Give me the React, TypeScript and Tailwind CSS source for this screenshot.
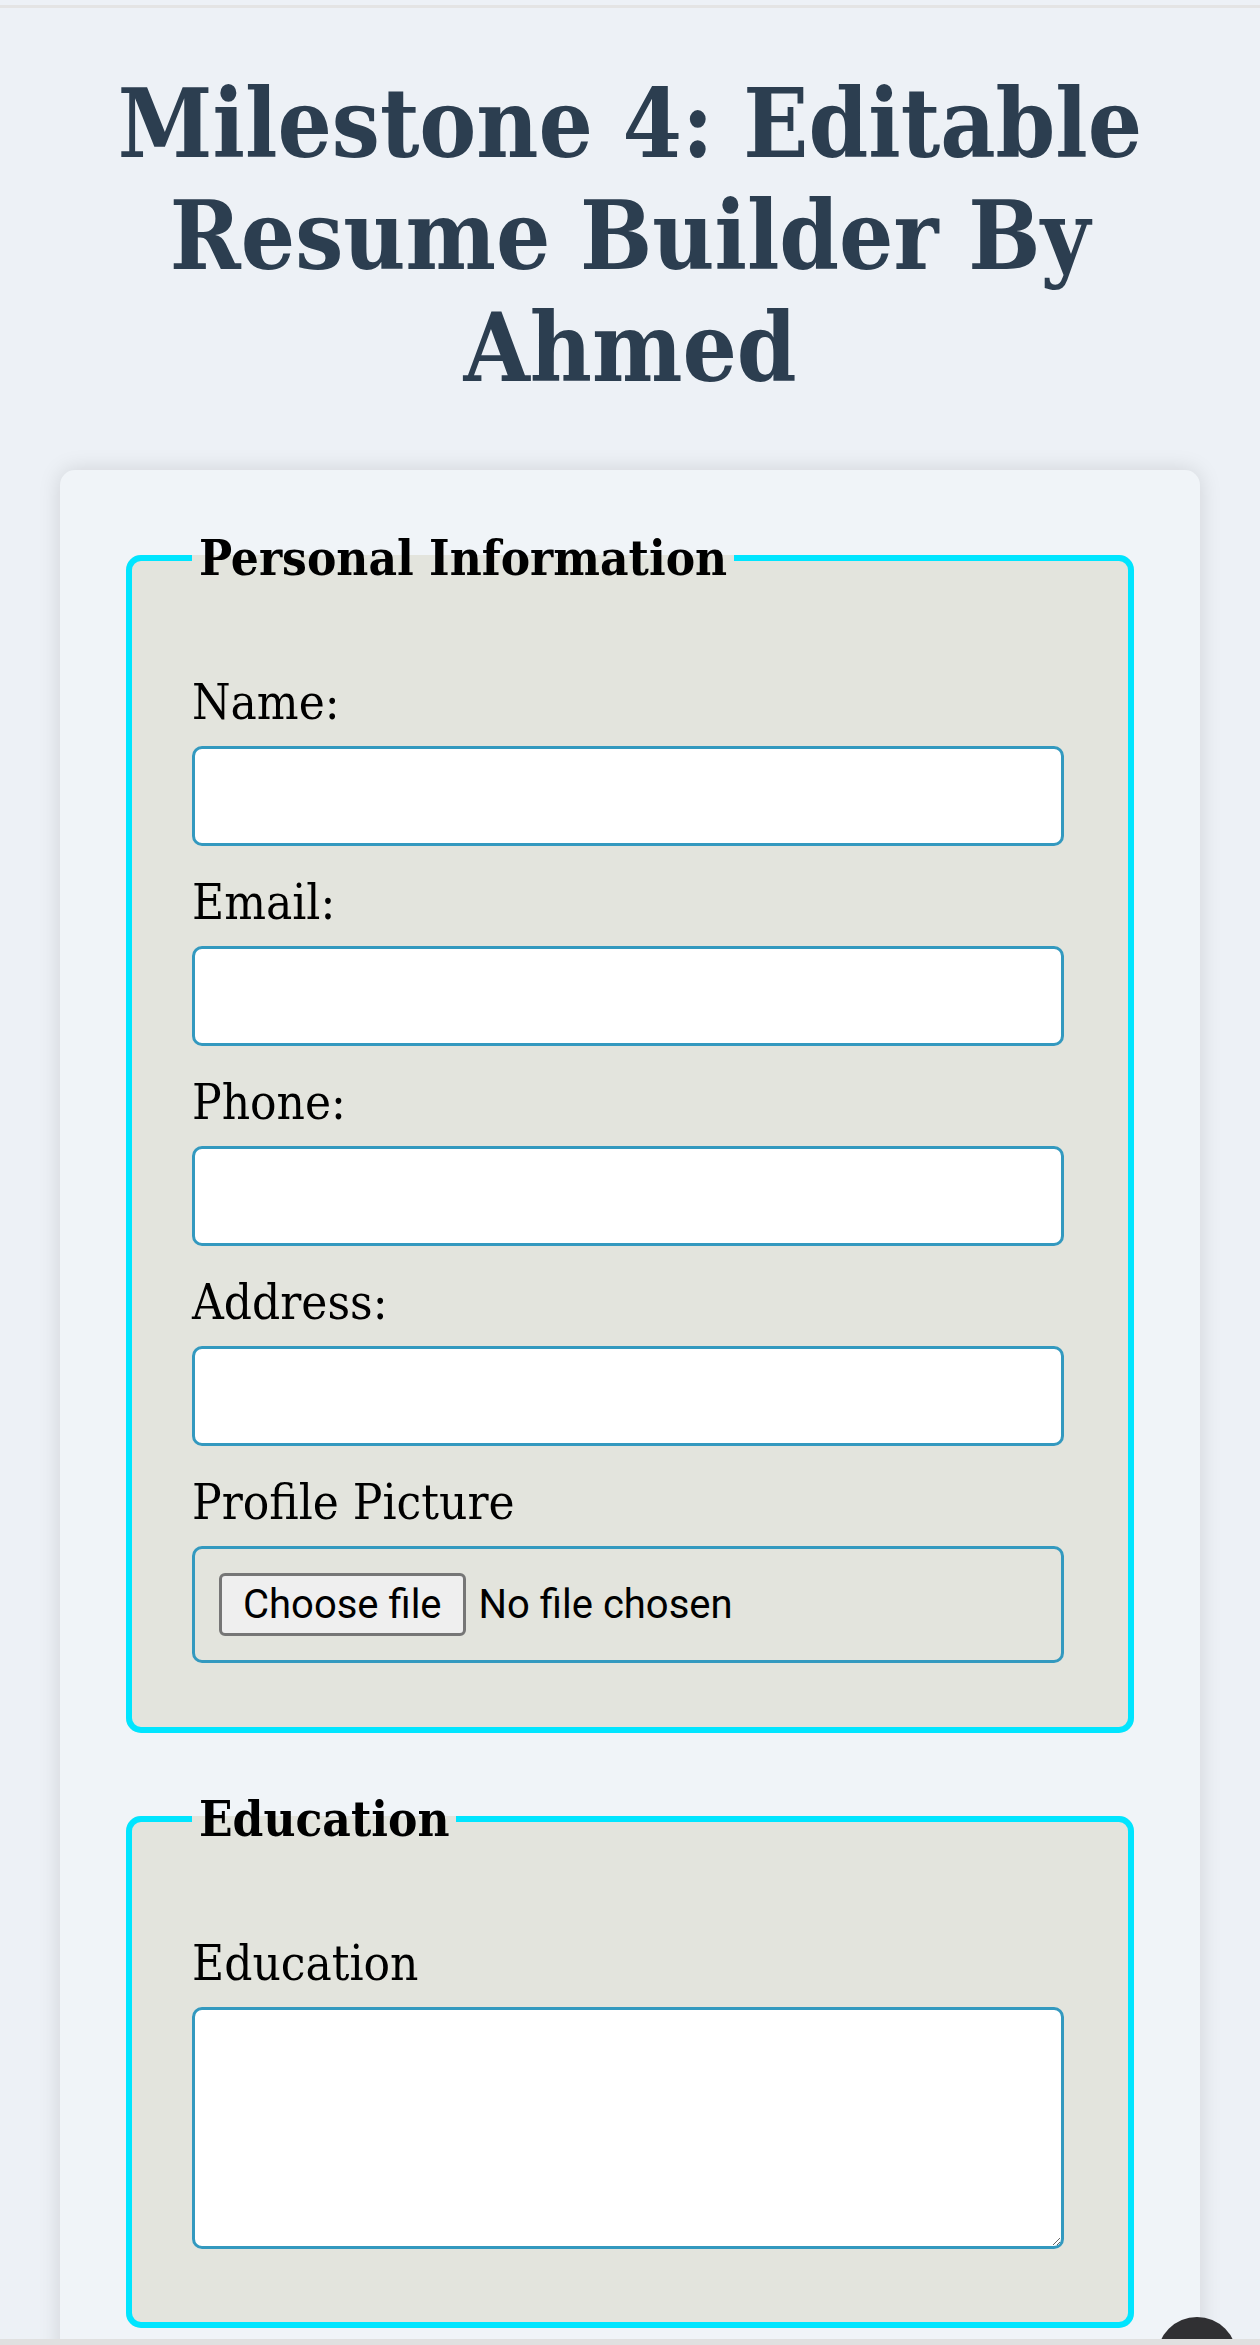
import { useState } from "react";

const serif = "font-['DejaVu_Serif',serif] font-stretch-condensed";

function Field({ label, type = "text" }: { label: string; type?: string }) {
  return (
    <div className="flex flex-col">
      <label className={`${serif} text-[49px] leading-[60px] text-black mb-[13px]`}>{label}</label>
      <input
        type={type}
        className="block w-full h-[100px] bg-white border-[3px] border-[#3399bf] rounded-[10px] px-[24px] text-[39px] outline-none"
      />
    </div>
  );
}

function Section({ title, children }: { title: string; children: React.ReactNode }) {
  return (
    <fieldset className="border-[6px] border-[#00e5ff] rounded-[15px] bg-[#e3e4dd] pl-[60px] pr-[64px] pt-[85px] pb-[64px]">
      <legend className={`${serif} font-bold text-[49px] leading-[60px] text-black px-[7px]`}>{title}</legend>
      {children}
    </fieldset>
  );
}

export default function App() {
  const [fileName, setFileName] = useState("");

  return (
    <div className="min-h-screen bg-[#edf1f6]">
      <div className="h-[5px]" />
      <div className="h-[3px] bg-[#e4e4e4]" />

      <h1 className={`${serif} font-bold text-[95px] leading-[112px] text-[#2c3e50] text-center mx-[60px] mt-[60px]`}>
        Milestone 4: Editable Resume Builder By Ahmed
      </h1>

      <form className="mx-[60px] mt-[66px] bg-[#f0f4f8] rounded-[15px] shadow-[0_0_22px_rgba(0,0,0,0.13)] px-[66px] pt-[58px] pb-[80px] flex flex-col gap-[56px]">
        <Section title="Personal Information">
          <div className="flex flex-col gap-[27px]">
            <Field label="Name:" />
            <Field label="Email:" type="email" />
            <Field label="Phone:" type="tel" />
            <Field label="Address:" />
            <div className="flex flex-col">
              <label className={`${serif} text-[49px] leading-[60px] text-black mb-[13px]`}>Profile Picture</label>
              <label className="flex items-center gap-[13px] border-[3px] border-[#3399bf] rounded-[10px] px-[24px] py-[24px] font-['Roboto',sans-serif] text-[40px] text-black">
                <span className="h-[63px] px-[21px] flex items-center bg-[#efefef] border-[3px] border-[#767676] rounded-[6px]">
                  Choose file
                </span>
                <span>{fileName || "No file chosen"}</span>
                <input
                  type="file"
                  accept="image/*"
                  className="hidden"
                  onChange={(e) => setFileName(e.target.files?.[0]?.name ?? "")}
                />
              </label>
            </div>
          </div>
        </Section>

        <Section title="Education">
          <div className="flex flex-col">
            <label className={`${serif} text-[49px] leading-[60px] text-black mb-[13px]`}>Education</label>
            <textarea className="block w-full h-[242px] bg-white border-[3px] border-[#3399bf] rounded-[10px] p-[24px] text-[39px] outline-none mb-[9px]" />
          </div>
        </Section>
      </form>

      {/* floating button peeking at the bottom */}
      <div className="fixed right-[23px] bottom-[-52px] w-[80px] h-[80px] rounded-full bg-[#303033]" />
      <div className="fixed left-0 right-0 bottom-0 h-[6px] bg-[#e0e0e0]" />
    </div>
  );
}
